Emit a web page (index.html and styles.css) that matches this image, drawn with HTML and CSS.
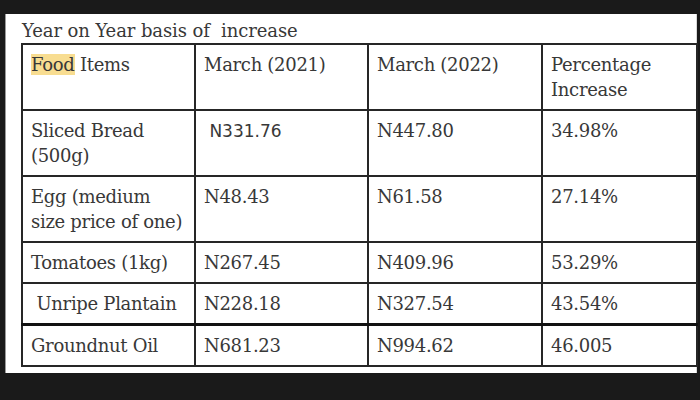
FILE: index.html
```html
<!DOCTYPE html>
<html>
<head>
<meta charset="utf-8">
<link rel="stylesheet" href="styles.css">
</head>
<body>
<div class="panel">
  <div class="title">Year on Year basis of&nbsp; increase</div>
  <table class="grid">
    <colgroup>
      <col class="c1"><col class="c2"><col class="c3"><col class="c4">
    </colgroup>
    <tr class="two">
      <td><span class="hl">Food</span> Items</td>
      <td>March (2021)</td>
      <td>March (2022)</td>
      <td>Percentage<br>Increase</td>
    </tr>
    <tr class="two">
      <td>Sliced Bread<br>(500g)</td>
      <td><span class="sans">&nbsp;N331.76</span></td>
      <td>N447.80</td>
      <td>34.98%</td>
    </tr>
    <tr class="two">
      <td>Egg (medium<br>size price of one)</td>
      <td>N48.43</td>
      <td>N61.58</td>
      <td>27.14%</td>
    </tr>
    <tr>
      <td>Tomatoes (1kg)</td>
      <td>N267.45</td>
      <td>N409.96</td>
      <td>53.29%</td>
    </tr>
    <tr class="thick">
      <td>&nbsp;Unripe Plantain</td>
      <td>N228.18</td>
      <td>N327.54</td>
      <td>43.54%</td>
    </tr>
    <tr>
      <td>Groundnut Oil</td>
      <td>N681.23</td>
      <td>N994.62</td>
      <td>46.005</td>
    </tr>
  </table>
</div>
</body>
</html>
```
FILE: styles.css
```css
html, body {
  margin: 0;
  padding: 0;
  background: #1a1a1a;
}
body {
  width: 700px;
  height: 400px;
  overflow: hidden;
}
.panel {
  margin: 14px 0 0 5px;
  width: 692px;
  box-sizing: border-box;
  background: #ffffff;
  border-left: 1px solid #9a9a9a;
  border-right: 1px solid #d8d8d8;
  padding: 4px 0 6px 15px;
  font-family: "DejaVu Serif", serif;
  font-size: 18px;
  color: #383838;
}
.title {
  line-height: 25px;
  padding-left: 1px;
  letter-spacing: -0.1px;
}
.grid {
  border-collapse: collapse;
  table-layout: fixed;
  width: 675px;
}
.c1 { width: 173px; }
.c2 { width: 173px; }
.c3 { width: 174px; }
.c4 { width: 155px; }
.grid td {
  border: 2px solid #262626;
  padding: 7px 8px 7px 8px;
  line-height: 25px;
  vertical-align: top;
  white-space: nowrap;
  letter-spacing: -0.3px;
}
.grid tr.thick td {
  border-bottom: 3px solid #111111;
}
.hl {
  background: #f8dd91;
}
.sans {
  font-family: "DejaVu Sans", sans-serif;
  font-size: 17px;
  letter-spacing: 0;
}
```
